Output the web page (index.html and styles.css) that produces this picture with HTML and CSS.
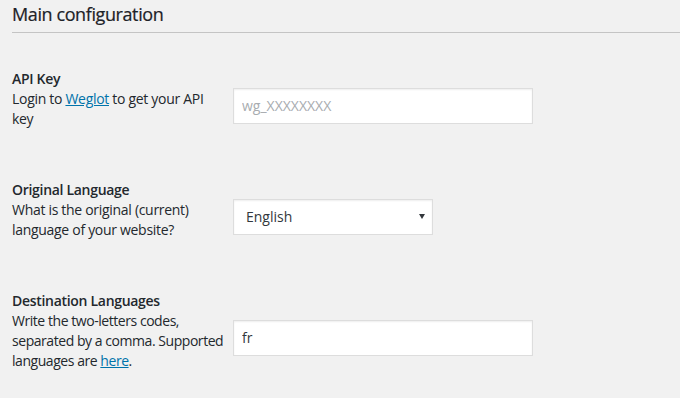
FILE: index.html
```html
<!DOCTYPE html>
<html lang="en">
<head>
  <meta charset="UTF-8" />
  <meta name="viewport" content="width=device-width, initial-scale=1.0"/>
  <title>Weglot - Main configuration</title>
<link rel="stylesheet" href="styles.css">
</head>
<body>
  <div class="wrap">
    <h2 class="section-title">Main configuration</h2>

    <div class="form-table">
      <div class="row">
        <div class="label">
          <h3>API Key</h3>
          <p>Login to <a href="#">Weglot</a> to get your API key</p>
        </div>
        <div class="field">
          <input type="text" class="text-input" placeholder="wg_XXXXXXXX" />
        </div>
      </div>

      <div class="row">
        <div class="label">
          <h3>Original Language</h3>
          <p>What is the original (current) language of your website?</p>
        </div>
        <div class="field">
          <div class="select-wrap">
            <select class="select-input">
              <option>English</option>
              <option>French</option>
              <option>German</option>
            </select>
          </div>
        </div>
      </div>

      <div class="row">
        <div class="label">
          <h3>Destination Languages</h3>
          <p class="tight">Write the two-letters codes, separated by a comma. Supported languages are <a href="#">here</a>.</p>
        </div>
        <div class="field">
          <input type="text" class="text-input" value="fr" />
        </div>
      </div>
    </div>
  </div>
</body>
</html>
```

FILE: styles.css
```css
* {
  box-sizing: border-box;
}

body {
  margin: 0;
  background: #f1f1f1;
  color: #23282d;
  font-family: "Segoe UI", "Open Sans", sans-serif;
  font-size: 14px;
  overflow: hidden;
}

.wrap {
  padding-left: 12px;
}

.section-title {
  margin: 0;
  padding: 3px 0 7px;
  font-size: 18px;
  font-weight: 400;
  line-height: 22px;
  letter-spacing: -0.4px;
  color: #1d2227;
  -webkit-text-stroke: 0.2px #1d2227;
  border-bottom: 1px solid #c4c4c4;
}

.form-table {
  padding-top: 17px;
}

.row {
  display: flex;
  align-items: center;
  padding: 19px 0;
}

.label {
  width: 215px;
  margin-right: 6px;
  padding-bottom: 13px;
  flex-shrink: 0;
  letter-spacing: -0.3px;
}

.label h3 {
  margin: 0;
  font-size: 14px;
  font-weight: 600;
  line-height: 20px;
}

.label p {
  margin: 0;
  line-height: 20px;
}

.label p.tight {
  letter-spacing: -0.45px;
}

.label a {
  color: #0073aa;
  text-decoration: underline;
}

.text-input,
.select-input {
  display: block;
  height: 36px;
  background: #fff;
  border: 1px solid #ddd;
  box-shadow: inset 0 1px 2px rgba(0,0,0,0.07);
  color: #32373c;
  font-family: inherit;
  font-size: 14px;
  outline: none;
}

.text-input {
  width: 300px;
  padding: 0 8px;
}

.text-input::placeholder {
  color: #a8acb0;
}

.select-wrap {
  position: relative;
  width: 200px;
}

.select-input {
  width: 200px;
  padding: 0 12px;
  appearance: none;
  -webkit-appearance: none;
  border-radius: 0;
}

.select-wrap::after {
  content: "";
  position: absolute;
  right: 8px;
  top: 15px;
  border-left: 3px solid transparent;
  border-right: 3px solid transparent;
  border-top: 5px solid #32373c;
  pointer-events: none;
}
```
